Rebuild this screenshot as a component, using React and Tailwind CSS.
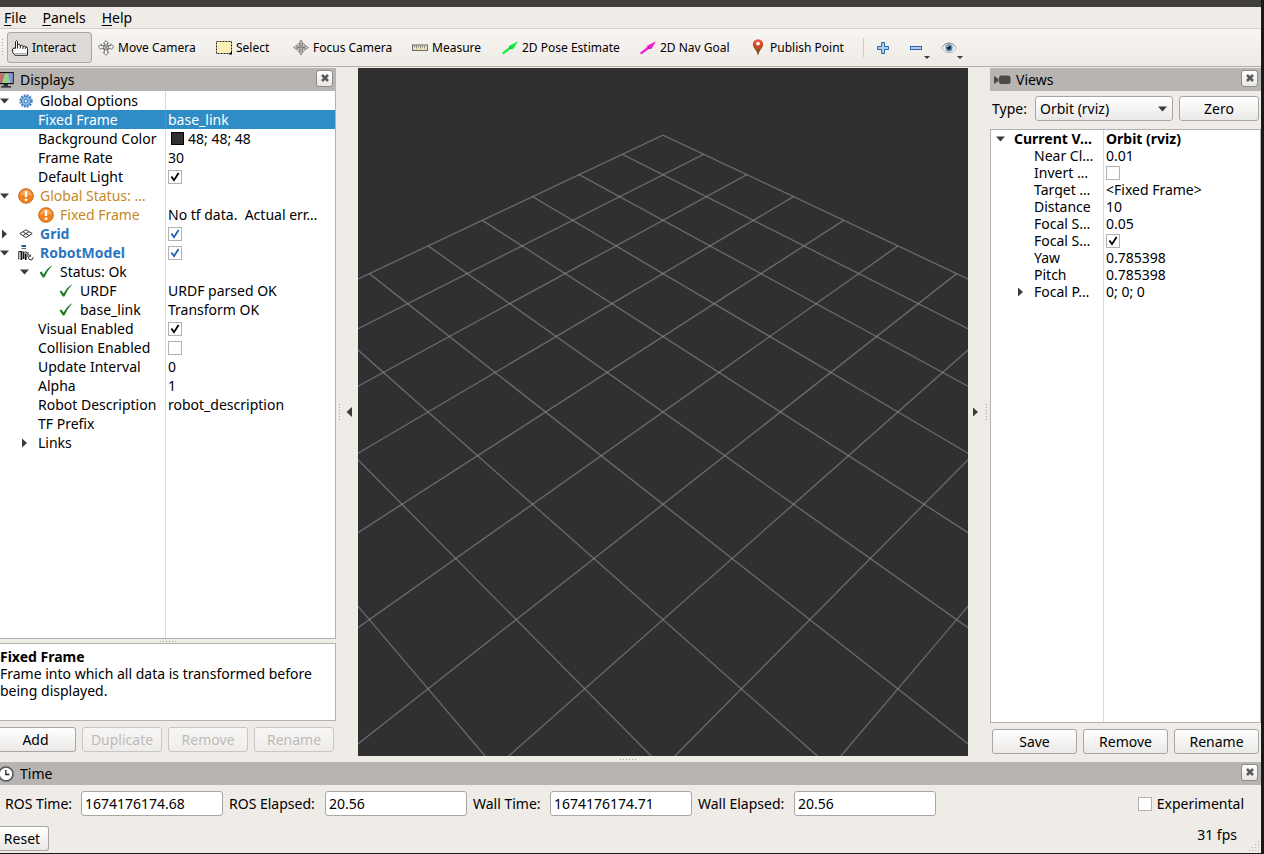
import { useState } from "react";

/* ---------- Icons ---------- */

function HandIcon() {
  return (
    <svg width="16" height="16" viewBox="0 0 16 16" fill="#fff" stroke="#222" strokeWidth="1">
      <path d="M3.5 8.5V1.6Q4.5 -.2 5.5 1.6V6V5Q6.8 3.8 8.2 5V6Q9.6 4.6 11 6V6.6Q12.4 5.6 13.4 6.6Q15.5 6.4 15.5 8.5V15.3H3L.6 12V8.8Q2 7.2 3.5 8.5Z" />
      <path d="M5.5 6V8.5M8.3 6V8.5M11 7V9M13.4 7V9" fill="none" />
      <path d="M3 13.5H15" stroke="#aaa" />
    </svg>
  );
}

function MoveIcon() {
  return (
    <svg width="16" height="16" viewBox="0 0 16 16" fill="#fff" stroke="#666" strokeWidth="0.9">
      <path d="M8 .6L10.6 3.4H9.2V5.6H11L12.6 6V4.2L15.6 6.2L13.6 9.4L12.4 8.2L9.6 9V12.4H10.8L8 15.4L5.2 12.4H6.4V9L3.6 8.2L2.4 9.4L.4 6.2L3.4 4.2V6L5 5.6H6.8V3.4H5.4Z" />
      <circle cx="8" cy="7.4" r="2.6" fill="#ddd" />
      <path d="M5.6 5L10.4 9.8M10.4 5L5.6 9.8" />
    </svg>
  );
}

function SelectIcon() {
  return (
    <svg width="16" height="14" viewBox="0 0 16 14">
      <rect x=".5" y=".5" width="15" height="12" fill="#fbf1b4" stroke="#222" strokeDasharray="2 1" />
      <path d="M16 10V13.5H12.5Z" fill="#000" />
    </svg>
  );
}

function FocusIcon() {
  return (
    <svg width="17" height="17" viewBox="0 0 17 17" fill="none" stroke="#808080" strokeWidth="1">
      <circle cx="8.5" cy="8.5" r="5" />
      <circle cx="8.5" cy="8.5" r="2.4" />
      <path d="M8.5 .5L10 3V7H14L16.5 8.5L14 10H10V14L8.5 16.5L7 14V10H3L.5 8.5L3 7H7V3Z" fill="#ccc" fillOpacity=".5" />
      <path d="M8.5 4V13M4 8.5H13" />
    </svg>
  );
}

function RulerIcon() {
  return (
    <svg width="16" height="8" viewBox="0 0 16 8">
      <rect x=".5" y="1" width="15" height="5.5" fill="#efe3b6" stroke="#6a6a6a" />
      <path d="M2.5 1.5V3.5M4.5 1.5V4.5M6.5 1.5V3.5M8.5 1.5V4.5M10.5 1.5V3.5M12.5 1.5V4.5" stroke="#777" strokeWidth=".8" />
    </svg>
  );
}

function ArrowIcon({ color, dark }) {
  return (
    <svg width="16" height="14" viewBox="0 0 16 14">
      <path d="M.6 12.6L8 7" stroke={color} strokeWidth="2.2" />
      <path d="M16 .2L11.4 8L9 7.4L6.4 5.2Z" fill={color} />
      <path d="M7.6 5.2L10.4 8.2L7.8 7.6Z" fill={dark} />
    </svg>
  );
}

function PinIcon() {
  return (
    <svg width="16" height="17" viewBox="0 0 16 17">
      <defs>
        <linearGradient id="pin" x1="0" y1="0" x2="0" y2="1">
          <stop offset="0" stopColor="#ea5443" />
          <stop offset=".3" stopColor="#d9492f" />
          <stop offset=".55" stopColor="#a8581c" />
          <stop offset="1" stopColor="#50351c" />
        </linearGradient>
      </defs>
      <path d="M8 16.5Q7 12.5 4 8.8Q2.8 7 2.8 5.4A5.2 5.2 0 0 1 13.2 5.4Q13.2 7 12 8.8Q9 12.5 8 16.5Z" fill="url(#pin)" />
      <circle cx="8" cy="4.6" r="1.9" fill="#fff" />
    </svg>
  );
}

function PlusIcon() {
  return (
    <svg width="12" height="12" viewBox="0 0 12 12">
      <path d="M4.5 .5H7.5V4.5H11.5V7.5H7.5V11.5H4.5V7.5H.5V4.5H4.5Z" fill="#a9cdee" stroke="#2f66a6" />
    </svg>
  );
}

function MinusIcon() {
  return (
    <svg width="12" height="4" viewBox="0 0 12 4">
      <rect x=".5" y=".5" width="11" height="3" fill="#a9cdee" stroke="#2f66a6" />
    </svg>
  );
}

function EyeIcon() {
  return (
    <svg width="16" height="12" viewBox="0 0 16 12">
      <path d="M.5 6Q3.5 1 8 1Q12.5 1 15.5 6Q12.5 10.8 8 10.8Q3.5 10.8 .5 6Z" fill="#f3f3f1" stroke="#b8b6b2" />
      <path d="M1.6 4.4Q4.6 1 8 1Q11.4 1 14.4 4.4" fill="none" stroke="#8f8d8a" />
      <circle cx="8" cy="5.8" r="3.6" fill="#5a86b8" />
      <circle cx="8" cy="5.8" r="1.8" fill="#0c1420" />
      <circle cx="6.8" cy="4.4" r=".7" fill="#fff" />
    </svg>
  );
}

function MonitorIcon() {
  return (
    <svg width="14" height="16" viewBox="0 0 14 16">
      <rect x="-3" y=".6" width="16.2" height="11" fill="#8fd48f" stroke="#111" strokeWidth="1.2" />
      <path d="M0 1.2H5L2 11H0Z" fill="#c56a70" />
      <path d="M8 1.2H12.6V11H10Z" fill="#8d8fdc" />
      <path d="M3.5 13H8M1 14.8H11" stroke="#111" strokeWidth="1.3" />
    </svg>
  );
}

function CameraIcon() {
  return (
    <svg width="17" height="10" viewBox="0 0 17 10" fill="#4c4a48">
      <path d="M0 1L4.5 4V6L0 9Z" />
      <rect x="5" y=".5" width="11.5" height="8.5" rx="2.5" />
    </svg>
  );
}

function ClockIcon() {
  return (
    <svg width="14" height="16" viewBox="0 0 14 16">
      <circle cx="6" cy="8" r="7" fill="#fff" stroke="#555" strokeWidth="1.6" />
      <path d="M5.8 4V8.5H9.5" fill="none" stroke="#222" strokeWidth="1.3" />
    </svg>
  );
}

function GearIcon() {
  return (
    <svg width="14" height="14" viewBox="0 0 14 14">
      <circle cx="7" cy="7" r="5.4" fill="none" stroke="#4681c2" strokeWidth="2.6" strokeDasharray="1.8 1.03" />
      <circle cx="7" cy="7" r="4.6" fill="#8db9e4" stroke="#4681c2" />
      <circle cx="7" cy="7" r="1.8" fill="#dcebf8" stroke="#4681c2" />
    </svg>
  );
}

function WarnIcon() {
  return (
    <svg width="16" height="16" viewBox="0 0 16 16">
      <circle cx="8" cy="8" r="7.3" fill="#f08221" stroke="#c9661a" />
      <path d="M2 8A6 6 0 0 1 14 8Q8 5.5 2 8Z" fill="#f9a650" />
      <path d="M8 3V9" stroke="#fff" strokeWidth="2.4" />
      <circle cx="8" cy="11.8" r="1.4" fill="#fff" />
    </svg>
  );
}

function GridIcon() {
  return (
    <svg width="14" height="10" viewBox="0 0 14 10" fill="none" stroke="#333">
      <path d="M7 .8L13.2 4.6L7 8.6L.8 4.6ZM3.9 2.7L10.1 6.6M10.1 2.7L3.9 6.6" />
    </svg>
  );
}

function RobotIcon() {
  return (
    <svg width="16" height="16" viewBox="0 0 16 16" fill="none" stroke="#1a1a1a">
      <path d="M3.5 1H8" stroke="#2b5a9a" strokeWidth="2" />
      <path d="M3.5 3.6H8" stroke="#555" strokeWidth="1" />
      <path d="M.8 14.5V6.5M.8 6.5H4" />
      <path d="M3.4 15V6M5.6 14V6.5M7.8 15V8.5" strokeWidth="1.7" />
      <path d="M7 6.5L9.4 8M10 7V12L11.4 14.5L13.6 15L15.4 12.4" />
      <path d="M12 9.5V12" strokeWidth="1.3" />
    </svg>
  );
}

function OkIcon() {
  return (
    <svg width="14" height="13" viewBox="0 0 14 13">
      <path d="M.6 7.6L2.4 6.6L4.6 9.4Q8.4 2.6 13.4 .2Q8.4 5.4 5.4 12.4H3.8Z" fill="#1f7a26" />
    </svg>
  );
}

function Tri({ dir, className = "" }) {
  const paths = {
    down: "M0 2.5H9L4.5 7.5Z",
    right: "M2 0.5L7 5L2 9.5Z",
    left: "M7 0V10L1.5 5Z",
  };
  return (
    <svg width="9" height="10" viewBox="0 0 9 10" fill="#3c3b37" className={className}>
      <path d={paths[dir]} />
    </svg>
  );
}

function SmallArrow() {
  return (
    <svg width="6" height="3" viewBox="0 0 6 3" fill="#3c3b37">
      <path d="M0 0H6L3 3Z" />
    </svg>
  );
}

/* ---------- Small widgets ---------- */

function Check({ checked, blue, label, id }) {
  const [on, setOn] = useState(checked);
  return (
    <span className="relative inline-flex size-[14px] shrink-0">
      <input
        id={id}
        type="checkbox"
        aria-label={label}
        checked={on}
        onChange={(e) => setOn(e.target.checked)}
        className="size-[14px] appearance-none border border-[#b5b1ad] bg-white"
      />
      {on && (
        <svg width="14" height="14" viewBox="0 0 14 14" className={`pointer-events-none absolute inset-0 ${blue ? "text-[#1f62ad]" : "text-black"}`}>
          <path d="M3.4 6.4L6 10.2L10.6 3" fill="none" stroke="currentColor" strokeWidth="1.8" />
        </svg>
      )}
    </span>
  );
}

function Button({ children, className = "", disabled }) {
  return (
    <button
      disabled={disabled}
      className={`h-[25px] rounded-[3px] border bg-linear-to-b text-center ${
        disabled ? "border-[#c9c5c1] from-[#f7f6f4] to-[#efedea] text-[#bebab7]" : "border-[#aaa6a3] from-white to-[#ebe9e7] text-black"
      } ${className}`}
    >
      {children}
    </button>
  );
}

function TitleBar({ icon, title, gap }) {
  return (
    <div className={`flex h-[23px] shrink-0 items-center bg-[#b8b4b1] pr-[3px] ${gap}`}>
      {icon}
      <h2 className="flex-1">{title}</h2>
      <button aria-label={`Close ${title}`} className="mb-[3px] grid size-[17px] place-items-center rounded-[3px] border border-[#8f8b88] bg-linear-to-b from-white to-[#e9e7e4]">
        <svg width="8" height="8" viewBox="0 0 8 8">
          <path d="M1 1L7 7M7 1L1 7" stroke="#5c5a58" strokeWidth="2.6" />
        </svg>
      </button>
    </div>
  );
}

const LEFT_INDENT = ["pl-0", "pl-[20px]", "pl-[40px]"];
const RIGHT_INDENT = ["pl-[5px]", "pl-[25px]"];

function PropertyTree({ rows, indent, rowHeight, keyWidth }) {
  return (
    <div className="flex min-h-0 flex-1 flex-col">
      <table className="w-full table-fixed border-separate border-spacing-0">
        <colgroup>
          <col className={keyWidth} />
          <col />
        </colgroup>
        <tbody>
          {rows.map((row, i) => (
            <tr key={i} className={`${rowHeight} ${row.selected ? "bg-[#308cc6] text-white" : ""}`}>
              <td className={`overflow-hidden border-r p-0 ${row.selected ? "border-[#4a96c9]" : "border-[#dcdad8]"}`}>
                <div className={`flex items-center whitespace-nowrap ${rowHeight} ${indent[row.level]}`}>
                  <span className="w-[18px] shrink-0">{row.open !== undefined && <Tri dir={row.open ? "down" : "right"} />}</span>
                  {row.icon && <span className="mr-[6px] flex w-4 shrink-0 justify-center">{row.icon}</span>}
                  <span className={row.style}>{row.name}</span>
                </div>
              </td>
              <td className="overflow-hidden p-0">
                <div className={`flex items-center pl-[2px] whitespace-pre ${rowHeight}`}>
                  {row.swatch && <span className="mr-1 ml-[3px] size-[13px] border border-black bg-[#303030]" />}
                  {row.check !== undefined ? <Check checked={row.check} blue={row.blue} label={row.name} /> : <span className={row.valueStyle}>{row.value}</span>}
                </div>
              </td>
            </tr>
          ))}
        </tbody>
      </table>
      <div className="flex flex-1">
        <div className={`border-r border-[#dcdad8] ${keyWidth}`} />
      </div>
    </div>
  );
}

/* ---------- Data ---------- */

const AMBER = "text-[#c4881d]";
const BLUE = "font-bold text-[#2a76c0]";

const DISPLAY_ROWS = [
  { level: 0, open: true, icon: <GearIcon />, name: "Global Options" },
  { level: 1, name: "Fixed Frame", value: "base_link", selected: true },
  { level: 1, name: "Background Color", value: "48; 48; 48", swatch: true },
  { level: 1, name: "Frame Rate", value: "30" },
  { level: 1, name: "Default Light", check: true },
  { level: 0, open: true, icon: <WarnIcon />, name: "Global Status: …", style: AMBER },
  { level: 1, icon: <WarnIcon />, name: "Fixed Frame", style: AMBER, value: "No tf data.  Actual err…" },
  { level: 0, open: false, icon: <GridIcon />, name: "Grid", style: BLUE, check: true, blue: true },
  { level: 0, open: true, icon: <RobotIcon />, name: "RobotModel", style: BLUE, check: true, blue: true },
  { level: 1, open: true, icon: <OkIcon />, name: "Status: Ok" },
  { level: 2, icon: <OkIcon />, name: "URDF", value: "URDF parsed OK" },
  { level: 2, icon: <OkIcon />, name: "base_link", value: "Transform OK" },
  { level: 1, name: "Visual Enabled", check: true },
  { level: 1, name: "Collision Enabled", check: false },
  { level: 1, name: "Update Interval", value: "0" },
  { level: 1, name: "Alpha", value: "1" },
  { level: 1, name: "Robot Description", value: "robot_description" },
  { level: 1, name: "TF Prefix", value: "" },
  { level: 1, open: false, name: "Links", value: "" },
];

const VIEW_ROWS = [
  { level: 0, open: true, name: "Current V…", value: "Orbit (rviz)", style: "font-bold", valueStyle: "font-bold" },
  { level: 1, name: "Near Cl…", value: "0.01" },
  { level: 1, name: "Invert …", check: false },
  { level: 1, name: "Target …", value: "<Fixed Frame>" },
  { level: 1, name: "Distance", value: "10" },
  { level: 1, name: "Focal S…", value: "0.05" },
  { level: 1, name: "Focal S…", check: true },
  { level: 1, name: "Yaw", value: "0.785398" },
  { level: 1, name: "Pitch", value: "0.785398" },
  { level: 1, open: false, name: "Focal P…", value: "0; 0; 0" },
];

const TOOLS = [
  { name: "Interact", icon: <HandIcon />, width: "w-[85px]" },
  { name: "Move Camera", icon: <MoveIcon />, width: "w-[117px]" },
  { name: "Select", icon: <SelectIcon />, width: "w-[76px]" },
  { name: "Focus Camera", icon: <FocusIcon />, width: "w-[118px]" },
  { name: "Measure", icon: <RulerIcon />, width: "w-[89px]" },
  { name: "2D Pose Estimate", icon: <ArrowIcon color="#12ee3c" dark="#0a9a28" />, width: "w-[137px]" },
  { name: "2D Nav Goal", icon: <ArrowIcon color="#fb12d8" dark="#8a0a78" />, width: "w-[109px]" },
  { name: "Publish Point", icon: <PinIcon />, width: "w-[118px]" },
];

const TIMES = [
  { id: "ros-time", label: "ROS Time:", value: "1674176174.68", width: "w-[76px]" },
  { id: "ros-elapsed", label: "ROS Elapsed:", value: "20.56", width: "w-[96px]" },
  { id: "wall-time", label: "Wall Time:", value: "1674176174.71", width: "w-[77px]" },
  { id: "wall-elapsed", label: "Wall Elapsed:", value: "20.56", width: "w-[96px]" },
];

/* ---------- 3D view ---------- */

// Orbit camera: distance 10, yaw and pitch 45 degrees, 45 degree vertical fov
const FOCAL = 344 / Math.tan(Math.PI / 8);

function project(i, j) {
  const half = (i + j) / 2;
  const depth = 10 + half;
  return [(FOCAL * (i - j)) / Math.SQRT2 / depth, (-FOCAL * half) / depth];
}

function GridView() {
  const lines = [];
  for (let k = -5; k <= 5; k++) {
    lines.push([project(k, -5), project(k, 5)]);
    lines.push([project(-5, k), project(5, k)]);
  }
  return (
    <svg viewBox="-305 -344 610 688" preserveAspectRatio="xMidYMid slice" className="block h-full w-full" role="img" aria-label="Grid">
      {lines.map(([a, b], i) => (
        <line key={i} x1={a[0]} y1={a[1]} x2={b[0]} y2={b[1]} stroke="#a0a0a4" strokeOpacity=".5" strokeWidth="1.4" />
      ))}
    </svg>
  );
}

function Dots({ vertical }) {
  return (
    <span
      className={
        vertical
          ? "h-[17px] w-px bg-[repeating-linear-gradient(to_bottom,#a5a19d_0_1px,transparent_1px_3px)]"
          : "h-px w-[17px] bg-[repeating-linear-gradient(to_right,#a5a19d_0_1px,transparent_1px_3px)]"
      }
    />
  );
}

/* ---------- App ---------- */

export default function App() {
  const [tool, setTool] = useState("Interact");

  return (
    <div className="flex h-screen flex-col overflow-hidden border-r-[3px] border-b border-[#161a18] bg-[#efebe7] font-['Noto_Sans','Open_Sans',sans-serif] text-[14px] leading-[17px] text-black">
      <div className="h-[7px] shrink-0 bg-[#403f3a]" />

      {/* Menu bar */}
      <nav className="flex h-[22px] shrink-0 items-center gap-4 border-b border-[#d3cfcb] pl-1">
        {["File", "Panels", "Help"].map((m) => (
          <button key={m}>
            <span className="underline decoration-1 underline-offset-2">{m[0]}</span>
            {m.slice(1)}
          </button>
        ))}
      </nav>

      {/* Toolbar */}
      <div className="mb-px flex h-[38px] shrink-0 items-center border-b border-[#b3aeaa] bg-linear-to-b from-[#f8f5f2] to-[#eeeae6] pl-[2px] text-[12px]">
        <Dots vertical />
        <div className="ml-1 flex gap-px">
          {TOOLS.map((t) => (
            <button
              key={t.name}
              onClick={() => setTool(t.name)}
              className={`flex h-[31px] items-center gap-1 rounded-[3px] border pl-1 whitespace-nowrap ${t.width} ${
                tool === t.name ? "border-[#aaa6a3] bg-[#dddad7]" : "border-transparent"
              }`}
            >
              <span className="flex w-4 shrink-0 justify-center">{t.icon}</span>
              {t.name}
            </button>
          ))}
        </div>
        <div className="h-[19px] w-px bg-[#cfcbc7]" />
        <button aria-label="Add tool" className="ml-[13px]">
          <PlusIcon />
        </button>
        <button aria-label="Remove tool" className="ml-[21px] flex h-[31px] items-center gap-[2px]">
          <MinusIcon />
          <span className="self-end pb-1"><SmallArrow /></span>
        </button>
        <button aria-label="Tool visibility" className="ml-[11px] flex h-[31px] items-center">
          <EyeIcon />
          <span className="self-end pb-1"><SmallArrow /></span>
        </button>
      </div>

      <div className="flex min-h-0 flex-1">
        {/* Displays */}
        <aside className="flex w-[336px] shrink-0 flex-col pb-[10px]">
          <TitleBar icon={<MonitorIcon />} title="Displays" gap="gap-[6px]" />
          <div className="flex min-h-0 flex-1 flex-col border-r border-b border-[#b5b1ad] bg-white">
            <PropertyTree rows={DISPLAY_ROWS} indent={LEFT_INDENT} rowHeight="h-[19px]" keyWidth="w-[166px]" />
          </div>
          <div className="flex h-1 items-center justify-center">
            <Dots />
          </div>
          <div className="h-[78px] border border-l-0 border-[#b5b1ad] bg-white pt-1">
            <h3 className="font-bold">Fixed Frame</h3>
            <p>Frame into which all data is transformed before being displayed.</p>
          </div>
          <div className="mt-[6px] flex gap-[6px] pr-[2px]">
            <Button className="w-[76px] rounded-l-none border-l-0 pr-1">Add</Button>
            <Button disabled className="flex-1">Duplicate</Button>
            <Button disabled className="flex-1">Remove</Button>
            <Button disabled className="flex-1">Rename</Button>
          </div>
        </aside>

        <button aria-label="Hide left dock" className="flex w-[22px] shrink-0 items-center gap-[5px] pb-[6px] pl-[3px]">
          <Dots vertical />
          <Tri dir="left" />
        </button>

        <main className="flex min-w-0 flex-1 flex-col">
          <div className="min-h-0 flex-1 bg-[#303030]">
            <GridView />
          </div>
          <div className="flex h-[6px] shrink-0 items-center justify-center pr-[70px]">
            <Dots />
          </div>
        </main>

        <button aria-label="Hide right dock" className="flex w-[22px] shrink-0 items-center gap-[6px] pb-[6px] pl-[3px]">
          <Tri dir="right" />
          <Dots vertical />
        </button>

        {/* Views */}
        <aside className="flex w-[271px] shrink-0 flex-col pb-2">
          <TitleBar icon={<span className="pl-1"><CameraIcon /></span>} title="Views" gap="gap-[5px]" />
          <div className="flex items-center py-[5px] pr-[2px] pl-[2px]">
            <label htmlFor="view-type" className="w-[43px]">Type:</label>
            <div className="relative flex-1">
              <select id="view-type" className="block h-[25px] w-full appearance-none rounded-[3px] border border-[#aaa6a3] bg-linear-to-b from-white to-[#ebe9e7] pl-1">
                <option>Orbit (rviz)</option>
              </select>
              <Tri dir="down" className="pointer-events-none absolute top-2 right-[6px]" />
            </div>
            <Button className="ml-[6px] w-[80px]">Zero</Button>
          </div>
          <div className="mt-[3px] flex min-h-0 flex-1 flex-col border border-[#b5b1ad] bg-white">
            <PropertyTree rows={VIEW_ROWS} indent={RIGHT_INDENT} rowHeight="h-[17px]" keyWidth="w-[113px]" />
          </div>
          <div className="mt-[6px] flex gap-[6px] px-[2px]">
            <Button className="flex-1">Save</Button>
            <Button className="flex-1">Remove</Button>
            <Button className="flex-1">Rename</Button>
          </div>
        </aside>
      </div>

      {/* Time */}
      <section className="shrink-0">
        <TitleBar icon={<ClockIcon />} title="Time" gap="gap-[6px]" />
        <div className="flex items-center gap-[6px] pt-[6px] pl-[5px]">
          {TIMES.map((t) => (
            <div key={t.id} className="flex items-center">
              <label htmlFor={t.id} className={`whitespace-nowrap ${t.width}`}>{t.label}</label>
              <input id={t.id} readOnly value={t.value} className="h-[25px] w-[142px] rounded-[3px] border border-[#aaa6a3] bg-white px-[3px]" />
            </div>
          ))}
          <div className="ml-auto flex items-center gap-[5px] pr-[17px]">
            <Check id="experimental" checked={false} />
            <label htmlFor="experimental">Experimental</label>
          </div>
        </div>
        <div className="mt-[10px] flex h-[27px] items-start">
          <Button className="w-[49px] rounded-l-none border-l-0 pr-1">Reset</Button>
          <span className="ml-auto">31 fps</span>
          <svg width="12" height="12" viewBox="0 0 12 12" className="ml-3 self-end" fill="#bab6b2">
            {[[9, 0], [6, 3], [9, 3], [3, 6], [6, 6], [9, 6], [0, 9], [3, 9], [6, 9], [9, 9]].map(([x, y]) => (
              <rect key={`${x}-${y}`} x={x} y={y} width="1" height="1" />
            ))}
          </svg>
        </div>
      </section>
    </div>
  );
}
